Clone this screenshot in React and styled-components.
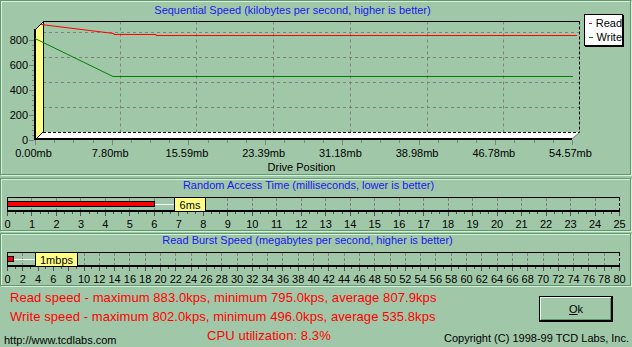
import styled, { createGlobalStyle } from "styled-components";

const GlobalStyle = createGlobalStyle`
  html, body {
    margin: 0;
    padding: 0;
    background: #a0c8a8;
  }
  body {
    font-family: "Liberation Sans", Arial, sans-serif;
    font-size: 11px;
  }
`;

const Window = styled.div`
  width: 632px;
  height: 347px;
  overflow: hidden;
  background: #a0c8a8;
  display: flex;
  flex-direction: column;
`;

const Panel = styled.section`
  position: relative;
  box-sizing: border-box;
  flex-shrink: 0;
  width: 631px;
  height: ${(p) => p.$h}px;
  margin-bottom: ${(p) => p.$gap}px;
  border: 1px solid #5f9a6d;
  box-shadow: inset 1px 1px 0 #d8efde, 1px 1px 0 #d8efde;
  display: flex;
  flex-direction: column;
`;

const PanelTitle = styled.div`
  flex-shrink: 0;
  height: ${(p) => p.$h}px;
  line-height: ${(p) => p.$lh}px;
  padding-right: ${(p) => p.$shift}px;
  text-align: center;
  color: #1818f0;
  font-size: 11px;
  white-space: nowrap;
`;

const Drawing = styled.svg`
  display: block;
  flex-shrink: 0;
  font-family: "Liberation Sans", Arial, sans-serif;
  font-size: 11px;
`;

const Legend = styled.div`
  position: absolute;
  top: 13px;
  left: 583px;
  box-sizing: border-box;
  width: 39px;
  height: 32px;
  padding: 1px 0 0 4px;
  background: #fff;
  border: 1px solid #000;
  box-shadow: 1px 1px 0 #000;
`;

const LegendRow = styled.div`
  display: flex;
  align-items: center;
  line-height: 14px;
  color: #000;
`;

const Swatch = styled.span`
  width: 4px;
  height: 1px;
  margin-right: 4px;
  background: ${(p) => p.$color};
`;

const Footer = styled.div`
  flex: 1;
  display: grid;
  grid-template-columns: 1fr auto;
  grid-template-rows: 38px 1fr;
  padding-top: 2px;
`;

const Stats = styled.div`
  padding-left: 10px;
`;

const StatLine = styled.div`
  color: #ff0000;
  font-size: 13px;
  line-height: 19px;
  letter-spacing: 0.08px;
  white-space: nowrap;
`;

const OkButton = styled.button`
  box-sizing: border-box;
  width: 74px;
  height: 26px;
  margin: 8px 19px 0 0;
  padding: 0;
  background: #a0c8a8;
  border: 1px solid #000;
  box-shadow: inset -1px -1px 0 #000, inset 1px 1px 0 #e8f6ec,
    inset -2px -2px 0 #5f9a6d;
  color: #000;
  font: 11px "Liberation Sans", Arial, sans-serif;
  & u {
    text-decoration: underline;
  }
`;

const BottomRow = styled.div`
  grid-column: 1 / 3;
  display: grid;
  grid-template-columns: 203px auto 1fr;
  align-items: start;
  padding: 0 3px 0 4px;
`;

const Url = styled.div`
  margin-top: 8px;
  line-height: 13px;
  color: #000;
`;

const Cpu = styled(StatLine)``;

const Copyright = styled.div`
  margin-top: 6px;
  line-height: 13px;
  text-align: right;
  color: #000;
  white-space: nowrap;
`;

/* sequential speed chart, drawn in window pixel coordinates */
const FL = 35;
const FR = 572;
const BL = 43;
const BR = 580;
const TOP = 21.5;
const BACK_B = 132.5;
const X_LABELS = ["0.00mb", "7.80mb", "15.59mb", "23.39mb", "31.18mb", "38.98mb", "46.78mb", "54.57mb"];
const Y_LABELS = ["800", "600", "400", "200", "0"];

const SeqChart = () => {
  const step = (FR - FL) / 7;
  const minors = [];
  for (let i = 0; i <= 28; i++) minors.push(FL + (i * step) / 4);
  const yMinors = [];
  for (let y = 40; y <= 140; y += 5) yMinors.push(y);

  return (
    <Drawing width="630" height="154" viewBox="1 20 630 154">
      {/* back wall grid */}
      {[32.5, 57.5, 82.5, 107.5].map((y) => (
        <line key={y} x1={BL} x2={BR} y1={y} y2={y} stroke="#808080" strokeDasharray="3 3" />
      ))}
      {[1, 2, 3, 4, 5, 6].map((k) => {
        const x = Math.round(BL + k * step) + 0.5;
        return (
          <g key={k}>
            <line x1={x} x2={x} y1={TOP} y2={BACK_B} stroke="#808080" strokeDasharray="3 3" />
            <line x1={x} x2={x - 7} y1={BACK_B} y2={139} stroke="#808080" strokeDasharray="2 2" />
          </g>
        );
      })}

      {/* floor */}
      <polygon points={`${BL},132 ${BR},132 ${FR},138 ${FL},138`} fill="#fff" />
      <line x1={BL} x2={BR} y1={BACK_B} y2={BACK_B} stroke="#000" strokeDasharray="3 2" />
      <line x1={BR} x2={FR} y1={132} y2={139} stroke="#808080" />
      <line x1={FL} x2={FR} y1={139} y2={139} stroke="#000" strokeWidth="2" />

      {/* left wall */}
      <polygon points={`${FL},30 ${BL},22 ${BL},132 ${FL},140`} fill="#ffff88" />
      <line x1={BL + 0.5} x2={BL + 0.5} y1={TOP} y2={BACK_B} stroke="#000" />
      <line x1={FL} x2={BL} y1={30} y2={22} stroke="#000" />
      <line x1={BL} x2={FL} y1={132} y2={140} stroke="#000" />
      <line x1={FL} x2={FL} y1={29} y2={140} stroke="#000" strokeWidth="2" />

      {/* back wall frame */}
      <line x1={BL} x2={BR} y1={TOP} y2={TOP} stroke="#000" />
      <line x1={BR - 0.5} x2={BR - 0.5} y1={TOP} y2={BACK_B} stroke="#000" strokeDasharray="3 2" />

      {/* data */}
      <polyline
        points="41,24.5 114,33.5 114,34.5 156,34.5 156,35.5 577,35.5"
        fill="none"
        stroke="#ff0000"
      />
      <polyline points="35,38.5 113,76.5 573,76.5" fill="none" stroke="#008000" />

      {/* y axis */}
      {yMinors.map((y) => (
        <line key={y} x1={32} x2={34} y1={y + 0.5} y2={y + 0.5} stroke="#808080" />
      ))}
      {Y_LABELS.map((t, i) => {
        const y = 40 + i * 25;
        return (
          <g key={t}>
            <line x1={29} x2={34} y1={y + 0.5} y2={y + 0.5} stroke="#808080" />
            <text x={28} y={y + 4} textAnchor="end" fill="#000">
              {t}
            </text>
          </g>
        );
      })}

      {/* x axis */}
      {minors.map((x, i) => (
        <line
          key={i}
          x1={Math.round(x) + 0.5}
          x2={Math.round(x) + 0.5}
          y1={140}
          y2={i % 4 === 0 ? 145 : 143}
          stroke="#808080"
        />
      ))}
      {X_LABELS.map((t, i) => (
        <text key={t} x={FL + i * step - 1.5} y={157} textAnchor="middle" fill="#000">
          {t}
        </text>
      ))}
      <text x={301.5} y={171} textAnchor="middle" fill="#000">
        Drive Position
      </text>
    </Drawing>
  );
};

/* horizontal gauge used by the random access and burst panels */
const Gauge = ({ max, grid, minor, value, label, labelW, gap }) => {
  const L = 6;
  const R = 618;
  const unit = (R - L) / max;
  const barEnd = Math.round(L + value * unit);
  const boxX = barEnd + gap;
  const grids = [];
  for (let v = grid; v < max; v += grid) grids.push(Math.round(L + v * unit) + 0.5);
  const ticks = [];
  const n = Math.round(max / minor);
  for (let i = 0; i <= n; i++) ticks.push({ x: Math.round(L + i * minor * unit) + 0.5, major: (i * minor) % grid < 1e-6 || grid - ((i * minor) % grid) < 1e-6 });
  const labels = [];
  for (let v = 0; v <= max; v += grid) labels.push(v);

  return (
    <Drawing width="630" height="35">
      {grids.map((x) => (
        <line key={x} x1={x} x2={x} y1={3} y2={15} stroke="#808080" strokeDasharray="3 2" />
      ))}
      <line x1={L} x2={R + 1} y1={2.5} y2={2.5} stroke="#000" />
      <line x1={L + 0.5} x2={L + 0.5} y1={2} y2={17} stroke="#000" />
      <line x1={R + 0.5} x2={R + 0.5} y1={3} y2={15} stroke="#000" strokeDasharray="3 2" />
      <line x1={L} x2={R + 1} y1={16} y2={16} stroke="#000" strokeWidth="2" />

      <rect x={L + 0.5} y={6.5} width={barEnd - L} height={5} fill="#ff0000" stroke="#000" />
      <line x1={barEnd + 1} x2={boxX} y1={9.5} y2={9.5} stroke="#fff" />
      <rect x={boxX + 0.5} y={2.5} width={labelW} height={14} fill="#ffff88" stroke="#000" />
      <text x={boxX + labelW / 2 + 0.5} y={13.5} textAnchor="middle" fill="#000">
        {label}
      </text>

      {ticks.map((t) => (
        <line key={t.x} x1={t.x} x2={t.x} y1={17} y2={t.major ? 21 : 19} stroke="#505050" />
      ))}
      {labels.map((v) => (
        <text key={v} x={L + v * unit + 0.5} y={33} textAnchor="middle" fill="#000">
          {v}
        </text>
      ))}
    </Drawing>
  );
};

const App = () => {
  return (
    <Window>
      <GlobalStyle />
      <Panel $h={175} $gap={3}>
        <PanelTitle $h={19} $lh={19} $shift={46}>
          Sequential Speed (kilobytes per second, higher is better)
        </PanelTitle>
        <SeqChart />
        <Legend>
          <LegendRow>
            <Swatch $color="#ff0000" />
            Read
          </LegendRow>
          <LegendRow>
            <Swatch $color="#008000" />
            Write
          </LegendRow>
        </Legend>
      </Panel>

      <Panel $h={53} $gap={2}>
        <PanelTitle $h={16} $lh={13} $shift={14}>
          Random Access Time (milliseconds, lower is better)
        </PanelTitle>
        <Gauge max={25} grid={1} minor={1 / 3} value={6} label="6ms" labelW={31} gap={20} />
      </Panel>

      <Panel $h={53} $gap={0}>
        <PanelTitle $h={16} $lh={13} $shift={16}>
          Read Burst Speed (megabytes per second, higher is better)
        </PanelTitle>
        <Gauge max={80} grid={2} minor={1} value={0.8} label="1mbps" labelW={42} gap={22} />
      </Panel>

      <Footer>
        <Stats>
          <StatLine>Read speed - maximum 883.0kps, minimum 795.0kps, average 807.9kps</StatLine>
          <StatLine>Write speed - maximum 802.0kps, minimum 496.0kps, average 535.8kps</StatLine>
        </Stats>
        <OkButton type="button">
          <u>O</u>k
        </OkButton>
        <BottomRow>
          <Url>http://www.tcdlabs.com</Url>
          <Cpu>CPU utilization: 8.3%</Cpu>
          <Copyright>Copyright (C) 1998-99 TCD Labs, Inc.</Copyright>
        </BottomRow>
      </Footer>
    </Window>
  );
};

export default App;
